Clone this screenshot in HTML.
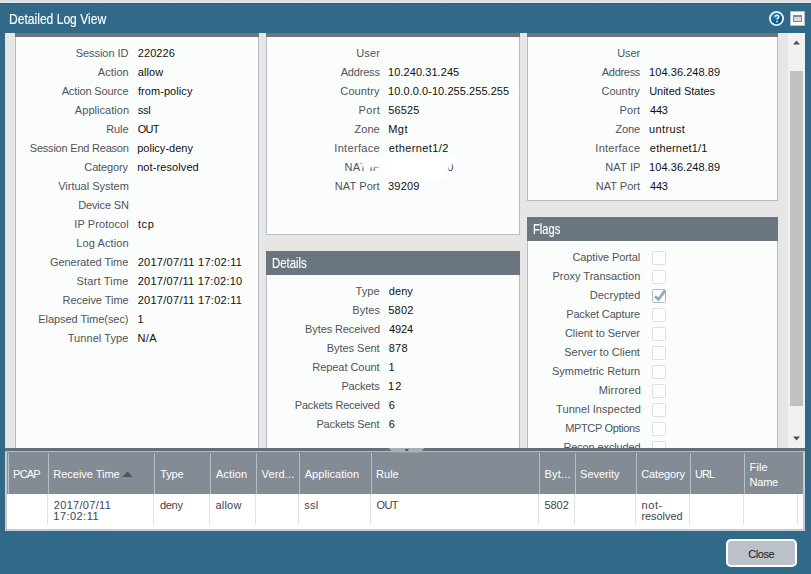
<!DOCTYPE html>
<html><head><meta charset="utf-8"><title>Detailed Log View</title>
<style>
html,body{margin:0;padding:0}
body{width:811px;height:574px;overflow:hidden;background:#306a88;position:relative;font-family:"Liberation Sans",sans-serif;font-size:11px}
div,span,svg{position:absolute;box-sizing:border-box}
.t{white-space:pre;line-height:14px;height:14px}
.cn{white-space:pre;color:#fff;transform-origin:0 0;line-height:16px;-webkit-text-stroke:.15px #fff}
#strip{left:0;top:0;width:811px;height:4px;background:#dcdfe3}
#body{left:5px;top:33px;width:800px;height:415px;background:#e6e6e6;overflow:hidden}
.pn{background:#fbfdfc;border-left:1px solid #b7bcc8;border-right:1px solid #b7bcc8}
.pb{border-bottom:1px solid #b7bcc8}
.hd{background:#6a757e}
.cb{width:14px;height:14px;border:1px solid #dce0e6;border-radius:1.500px;background:#fcfdfd;left:647px}
#sb{left:783px;top:0;width:17px;height:415px;background:#f1f1f1}
#grid{left:5px;top:451px;width:800px;height:80px;background:#c9cdd2}
.hs{top:2px;width:1px;height:41px;background:#b9bfc6}
.rs{top:43px;width:1px;height:31px;background:#dfe2e6}
</style></head><body>
<div id="strip"><div style="left:8px;top:0;width:1px;height:2px;background:#d0d6dd"></div><div style="left:97px;top:0;width:1px;height:2px;background:#d0d6dd"></div><div style="left:172px;top:0;width:1px;height:2px;background:#d0d6dd"></div><div style="left:227px;top:0;width:1px;height:2px;background:#d0d6dd"></div><div style="left:309px;top:0;width:1px;height:2px;background:#d0d6dd"></div><div style="left:399px;top:0;width:1px;height:2px;background:#d0d6dd"></div><div style="left:446px;top:0;width:1px;height:2px;background:#d0d6dd"></div><div style="left:519px;top:0;width:1px;height:2px;background:#d0d6dd"></div><div style="left:595px;top:0;width:1px;height:2px;background:#d0d6dd"></div><div style="left:658px;top:0;width:1px;height:2px;background:#d0d6dd"></div><div style="left:739px;top:0;width:1px;height:2px;background:#d0d6dd"></div><div style="left:0;top:2px;width:811px;height:1px;background:#e7e9ec"></div><div style="left:0;top:3px;width:811px;height:1px;background:#27607f"></div></div>
<span class="cn" id="title" style="left:9.300px;top:11px;font-size:14.5px;transform:scaleX(.833);-webkit-text-stroke:.15px #fff">Detailed Log View</span>
<!-- help icon -->
<svg style="left:768px;top:10px" width="17" height="17" viewBox="0 0 17 17">
<defs><radialGradient id="hg" cx="35%" cy="28%" r="75%"><stop offset="0" stop-color="#2f8acb"/><stop offset=".55" stop-color="#0f639d"/><stop offset="1" stop-color="#084470"/></radialGradient></defs>
<circle cx="8.5" cy="8.5" r="6.6" fill="url(#hg)" stroke="#e6eef8" stroke-width="1.9"/>
<path d="M7.400 7c0-1 .65-1.650 1.650-1.650 1 0 1.650.6 1.650 1.450 0 .8-.45 1.100-.9 1.500-.5.400-.7.700-.7 1.300" fill="none" stroke="#fff" stroke-width="1.500"/><circle cx="9.100" cy="11.600" r=".95" fill="#fff"/>
</svg>
<!-- maximize icon -->
<div style="left:790px;top:11px;width:15px;height:15px;background:#fff;border:1px solid #b9bec3"><div style="left:2px;top:3px;width:9px;height:7px;border:1px solid #7b8a99;border-top-width:2px;background:#dadada"></div></div>

<div id="body">
 <!-- panel 1 -->
 <div class="pn" style="left:10px;top:0;width:244px;height:420px"></div>
 <div class="hd" style="left:10px;top:0;width:244px;height:4px"></div>
 <!-- panel 2 -->
 <div class="pn pb" style="left:261px;top:0;width:254px;height:202px"></div>
 <div class="hd" style="left:261px;top:0;width:254px;height:4px"></div>
 <div class="pn" style="left:261px;top:218px;width:254px;height:200px"></div>
 <div class="hd" style="left:261px;top:218px;width:254px;height:24px"></div>
 <!-- panel 3 -->
 <div class="pn pb" style="left:522px;top:0;width:251px;height:168px"></div>
 <div class="hd" style="left:522px;top:0;width:251px;height:4px"></div>
 <div class="pn" style="left:522px;top:184px;width:251px;height:240px"></div>
 <div class="hd" style="left:522px;top:184px;width:251px;height:24px"></div>
 <!-- checkboxes -->
 <div class="cb" style="top:218px"></div>
 <div class="cb" style="top:237px"></div>
 <div class="cb" style="top:256px;border-color:#b3bac3"><svg style="left:-1px;top:-1px;overflow:visible" width="15" height="14"><path d="M2.900 7.300L6.400 10.500L13.100 1.700" fill="none" stroke="#8aaac2" stroke-width="2.800"/></svg></div>
 <div class="cb" style="top:275px"></div>
 <div class="cb" style="top:294px"></div>
 <div class="cb" style="top:313px"></div>
 <div class="cb" style="top:332px"></div>
 <div class="cb" style="top:351px"></div>
 <div class="cb" style="top:370px"></div>
 <div class="cb" style="top:389px"></div>
 <div class="cb" style="top:408px"></div>
 <!-- scrollbar -->
 <div id="sb">
  <div style="left:2px;top:38px;width:13px;height:335px;background:#c1c1c1"></div>
  <svg style="left:0;top:0" width="17" height="415"><path d="M5 11.500l3.500-4 3.500 4z" fill="#505050"/><path d="M5 403.500l3.500 4 3.500-4z" fill="#505050"/></svg>
 </div>
</div>
<span class="cn" style="left:272px;top:255px;font-size:14px;transform:scaleX(.81)">Details</span>
<span class="cn" style="left:533px;top:221px;font-size:14px;transform:scaleX(.80)">Flags</span>
<div id="toptext" style="left:0;top:0;width:811px;height:448px;overflow:hidden">
<span class="t" style="left:75.79px;top:46.19px;color:#4f5459;letter-spacing:-0.062px">Session ID</span>
<span class="t" style="left:137.70px;top:46.19px;color:#111;letter-spacing:0.109px">220226</span>
<span class="t" style="left:97.87px;top:65.19px;color:#4f5459;letter-spacing:0.061px">Action</span>
<span class="t" style="left:137.73px;top:65.19px;color:#111;letter-spacing:0.121px">allow</span>
<span class="t" style="left:61.67px;top:84.19px;color:#4f5459;letter-spacing:-0.133px">Action Source</span>
<span class="t" style="left:137.90px;top:84.19px;color:#111;letter-spacing:0.071px">from-policy</span>
<span class="t" style="left:74.87px;top:103.19px;color:#4f5459;letter-spacing:0.033px">Application</span>
<span class="t" style="left:137.67px;top:103.19px;color:#111;letter-spacing:-0.175px">ssl</span>
<span class="t" style="left:106.21px;top:122.19px;color:#4f5459;letter-spacing:-0.071px">Rule</span>
<span class="t" style="left:137.72px;top:122.19px;color:#111;letter-spacing:-0.707px">OUT</span>
<span class="t" style="left:29.79px;top:141.19px;color:#4f5459;letter-spacing:-0.213px">Session End Reason</span>
<span class="t" style="left:137.16px;top:141.19px;color:#111;letter-spacing:0.016px">policy-deny</span>
<span class="t" style="left:84.37px;top:160.19px;color:#4f5459;letter-spacing:-0.150px">Category</span>
<span class="t" style="left:137.15px;top:160.19px;color:#111;letter-spacing:0.094px">not-resolved</span>
<span class="t" style="left:58.15px;top:179.19px;color:#4f5459;letter-spacing:0.002px">Virtual System</span>
<span class="t" style="left:78.27px;top:198.19px;color:#4f5459;letter-spacing:-0.162px">Device SN</span>
<span class="t" style="left:74.35px;top:217.19px;color:#4f5459;letter-spacing:0.082px">IP Protocol</span>
<span class="t" style="left:137.90px;top:217.19px;color:#111;letter-spacing:0.624px">tcp</span>
<span class="t" style="left:76.17px;top:236.19px;color:#4f5459;letter-spacing:0.119px">Log Action</span>
<span class="t" style="left:49.89px;top:255.19px;color:#4f5459;letter-spacing:-0.032px">Generated Time</span>
<span class="t" style="left:137.70px;top:255.19px;color:#111;letter-spacing:0.276px">2017/07/11 17:02:11</span>
<span class="t" style="left:76.49px;top:274.19px;color:#4f5459;letter-spacing:0.197px">Start Time</span>
<span class="t" style="left:137.70px;top:274.19px;color:#111;letter-spacing:0.242px">2017/07/11 17:02:10</span>
<span class="t" style="left:62.51px;top:293.19px;color:#4f5459;letter-spacing:-0.047px">Receive Time</span>
<span class="t" style="left:137.70px;top:293.19px;color:#111;letter-spacing:0.276px">2017/07/11 17:02:11</span>
<span class="t" style="left:38.31px;top:312.19px;color:#4f5459;letter-spacing:-0.056px">Elapsed Time(sec)</span>
<span class="t" style="left:137.42px;top:312.19px;color:#111;letter-spacing:0.000px">1</span>
<span class="t" style="left:67.71px;top:331.19px;color:#4f5459;letter-spacing:0.077px">Tunnel Type</span>
<span class="t" style="left:137.59px;top:331.19px;color:#111;letter-spacing:0.330px">N/A</span>
<span class="t" style="left:356.25px;top:46.19px;color:#4f5459;letter-spacing:0.123px">User</span>
<span class="t" style="left:340.67px;top:65.19px;color:#4f5459;letter-spacing:-0.179px">Address</span>
<span class="t" style="left:388.02px;top:65.19px;color:#111;letter-spacing:0.071px">10.240.31.245</span>
<span class="t" style="left:340.37px;top:84.19px;color:#4f5459;letter-spacing:0.091px">Country</span>
<span class="t" style="left:388.02px;top:84.19px;color:#111;letter-spacing:0.056px">10.0.0.0-10.255.255.255</span>
<span class="t" style="left:358.41px;top:103.19px;color:#4f5459;letter-spacing:0.387px">Port</span>
<span class="t" style="left:388.17px;top:103.19px;color:#111;letter-spacing:0.169px">56525</span>
<span class="t" style="left:354.58px;top:122.19px;color:#4f5459;letter-spacing:0.028px">Zone</span>
<span class="t" style="left:388.19px;top:122.19px;color:#111;letter-spacing:0.489px">Mgt</span>
<span class="t" style="left:334.25px;top:141.19px;color:#4f5459;letter-spacing:0.328px">Interface</span>
<span class="t" style="left:388.72px;top:141.19px;color:#111;letter-spacing:0.403px">ethernet1/2</span>
<span class="t" style="left:344.49px;top:160.19px;color:#4f5459;letter-spacing:0.225px">NAT IP</span>
<span class="t" style="left:334.79px;top:179.19px;color:#4f5459;letter-spacing:0.097px">NAT Port</span>
<span class="t" style="left:388.05px;top:179.19px;color:#111;letter-spacing:0.202px">39209</span>
<span class="t" style="left:440.67px;top:160.19px;color:#333;letter-spacing:0.482px">40</span>
<span class="t" style="left:355.51px;top:284.19px;color:#4f5459;letter-spacing:0.124px">Type</span>
<span class="t" style="left:388.72px;top:284.19px;color:#111;letter-spacing:0.099px">deny</span>
<span class="t" style="left:352.21px;top:303.19px;color:#4f5459;letter-spacing:0.092px">Bytes</span>
<span class="t" style="left:388.17px;top:303.19px;color:#111;letter-spacing:0.257px">5802</span>
<span class="t" style="left:305.11px;top:322.19px;color:#4f5459;letter-spacing:-0.115px">Bytes Received</span>
<span class="t" style="left:388.97px;top:322.19px;color:#111;letter-spacing:-0.103px">4924</span>
<span class="t" style="left:326.71px;top:341.19px;color:#4f5459;letter-spacing:-0.027px">Bytes Sent</span>
<span class="t" style="left:388.72px;top:341.19px;color:#111;letter-spacing:0.225px">878</span>
<span class="t" style="left:312.31px;top:360.19px;color:#4f5459;letter-spacing:-0.055px">Repeat Count</span>
<span class="t" style="left:388.52px;top:360.19px;color:#111;letter-spacing:0.000px">1</span>
<span class="t" style="left:341.41px;top:379.19px;color:#4f5459;letter-spacing:-0.135px">Packets</span>
<span class="t" style="left:388.02px;top:379.19px;color:#111;letter-spacing:1.208px">12</span>
<span class="t" style="left:294.81px;top:398.19px;color:#4f5459;letter-spacing:-0.198px">Packets Received</span>
<span class="t" style="left:388.67px;top:398.19px;color:#111;letter-spacing:0.000px">6</span>
<span class="t" style="left:316.41px;top:417.19px;color:#4f5459;letter-spacing:-0.155px">Packets Sent</span>
<span class="t" style="left:388.67px;top:417.19px;color:#111;letter-spacing:0.000px">6</span>
<span class="t" style="left:617.25px;top:46.19px;color:#4f5459;letter-spacing:-0.077px">User</span>
<span class="t" style="left:601.77px;top:65.19px;color:#4f5459;letter-spacing:-0.296px">Address</span>
<span class="t" style="left:649.12px;top:65.19px;color:#111;letter-spacing:0.050px">104.36.248.89</span>
<span class="t" style="left:601.47px;top:84.19px;color:#4f5459;letter-spacing:-0.025px">Country</span>
<span class="t" style="left:649.15px;top:84.19px;color:#111;letter-spacing:-0.011px">United States</span>
<span class="t" style="left:619.61px;top:103.19px;color:#4f5459;letter-spacing:0.120px">Port</span>
<span class="t" style="left:650.07px;top:103.19px;color:#111;letter-spacing:-0.252px">443</span>
<span class="t" style="left:615.48px;top:122.19px;color:#4f5459;letter-spacing:-0.139px">Zone</span>
<span class="t" style="left:649.11px;top:122.19px;color:#111;letter-spacing:0.344px">untrust</span>
<span class="t" style="left:595.35px;top:141.19px;color:#4f5459;letter-spacing:0.240px">Interface</span>
<span class="t" style="left:649.82px;top:141.19px;color:#111;letter-spacing:0.195px">ethernet1/1</span>
<span class="t" style="left:605.29px;top:160.19px;color:#4f5459;letter-spacing:0.145px">NAT IP</span>
<span class="t" style="left:649.12px;top:160.19px;color:#111;letter-spacing:0.050px">104.36.248.89</span>
<span class="t" style="left:595.79px;top:179.19px;color:#4f5459;letter-spacing:0.012px">NAT Port</span>
<span class="t" style="left:650.07px;top:179.19px;color:#111;letter-spacing:-0.252px">443</span>
<span class="t" style="left:572.47px;top:250.19px;color:#4f5459;letter-spacing:-0.099px">Captive Portal</span>
<span class="t" style="left:552.51px;top:269.19px;color:#4f5459;letter-spacing:-0.017px">Proxy Transaction</span>
<span class="t" style="left:589.67px;top:288.19px;color:#4f5459;letter-spacing:0.071px">Decrypted</span>
<span class="t" style="left:566.21px;top:307.19px;color:#4f5459;letter-spacing:-0.149px">Packet Capture</span>
<span class="t" style="left:564.97px;top:326.19px;color:#4f5459;letter-spacing:-0.057px">Client to Server</span>
<span class="t" style="left:564.19px;top:345.19px;color:#4f5459;letter-spacing:-0.006px">Server to Client</span>
<span class="t" style="left:551.99px;top:364.19px;color:#4f5459;letter-spacing:0.016px">Symmetric Return</span>
<span class="t" style="left:598.69px;top:383.19px;color:#4f5459;letter-spacing:0.164px">Mirrored</span>
<span class="t" style="left:556.11px;top:402.19px;color:#4f5459;letter-spacing:0.049px">Tunnel Inspected</span>
<span class="t" style="left:565.19px;top:421.19px;color:#4f5459;letter-spacing:-0.349px">MPTCP Options</span>
<span class="t" style="left:563.41px;top:440.19px;color:#4f5459;letter-spacing:-0.121px">Recon excluded</span>
<!-- smudge -->
<svg style="left:355px;top:152px;filter:blur(.8px)" width="105" height="32"><path d="M6.300 5 Q50 1 98 5 L98 11.500 L96 14.500 L93 17 L91 26 L30 26 L30 15.400 L6.300 15.200 Z" fill="#fff"/></svg>
</div>
<!-- splitter -->
<div style="left:5px;top:448px;width:800px;height:3px;background:#62707a"></div>
<div id="grid">
 <div style="left:0;top:0;width:800px;height:1px;background:#b4bac1"></div>
 <div style="left:2px;top:1px;width:796px;height:42px;background:#838c95"></div>
 <div style="left:2px;top:43px;width:796px;height:35px;background:#fff"></div>
 <div class="hs" style="left:3px"></div>
 <div class="hs" style="left:43px"></div><div class="hs" style="left:149px"></div><div class="hs" style="left:205px"></div><div class="hs" style="left:251px"></div><div class="hs" style="left:294px"></div><div class="hs" style="left:366px"></div><div class="hs" style="left:534px"></div><div class="hs" style="left:570px"></div><div class="hs" style="left:631px"></div><div class="hs" style="left:685px"></div><div class="hs" style="left:739px"></div><div class="rs" style="left:42px"></div><div class="rs" style="left:148px"></div><div class="rs" style="left:204px"></div><div class="rs" style="left:250px"></div><div class="rs" style="left:293px"></div><div class="rs" style="left:365px"></div><div class="rs" style="left:533px"></div><div class="rs" style="left:569px"></div><div class="rs" style="left:630px"></div><div class="rs" style="left:684px"></div><div class="rs" style="left:738px"></div><div class="rs" style="left:792px"></div>
</div>
<svg style="left:386px;top:448px" width="42" height="5"><path d="M2.500 0h36l-4.500 4.500h-27z" fill="#a9aeb4"/><path d="M18.500 1h4.500l-2.250 2.500z" fill="#444c55"/></svg>
<svg style="left:122px;top:471px" width="12" height="7"><path d="M.5 6l5-5.500 5 5.500z" fill="#4b5560"/></svg>
<div style="left:726px;top:539px;width:71px;height:28px;border:2px solid #fff;border-radius:5px;background:#bcc0c8"></div>
<div id="bottext" style="left:0;top:0;width:811px;height:574px">
<span class="t" style="left:13.11px;top:467.19px;color:#ffffff;letter-spacing:-0.793px">PCAP</span>
<span class="t" style="left:53.31px;top:467.19px;color:#ffffff;letter-spacing:-0.019px">Receive Time</span>
<span class="t" style="left:160.31px;top:467.19px;color:#ffffff;letter-spacing:-0.143px">Type</span>
<span class="t" style="left:215.97px;top:467.19px;color:#ffffff;letter-spacing:0.101px">Action</span>
<span class="t" style="left:261.55px;top:467.19px;color:#ffffff;letter-spacing:0.169px">Verd...</span>
<span class="t" style="left:304.67px;top:467.19px;color:#ffffff;letter-spacing:0.063px">Application</span>
<span class="t" style="left:376.11px;top:467.19px;color:#ffffff;letter-spacing:-0.004px">Rule</span>
<span class="t" style="left:544.51px;top:467.19px;color:#ffffff;letter-spacing:0.184px">Byt...</span>
<span class="t" style="left:580.09px;top:467.19px;color:#ffffff;letter-spacing:-0.039px">Severity</span>
<span class="t" style="left:641.27px;top:467.19px;color:#ffffff;letter-spacing:-0.136px">Category</span>
<span class="t" style="left:695.05px;top:467.19px;color:#ffffff;letter-spacing:-0.967px">URL</span>
<span class="t" style="left:749.61px;top:459.89px;color:#ffffff;letter-spacing:0.063px">File</span>
<span class="t" style="left:749.59px;top:474.79px;color:#ffffff;letter-spacing:-0.235px">Name</span>
<span class="t" style="left:53.80px;top:498.19px;color:#3f444b;letter-spacing:0.302px">2017/07/11</span>
<span class="t" style="left:53.32px;top:509.19px;color:#3f444b;letter-spacing:0.458px">17:02:11</span>
<span class="t" style="left:159.92px;top:498.19px;color:#3f444b;letter-spacing:-0.268px">deny</span>
<span class="t" style="left:215.43px;top:498.19px;color:#3f444b;letter-spacing:0.221px">allow</span>
<span class="t" style="left:304.37px;top:498.19px;color:#3f444b;letter-spacing:0.175px">ssl</span>
<span class="t" style="left:376.42px;top:498.19px;color:#3f444b;letter-spacing:-0.557px">OUT</span>
<span class="t" style="left:544.47px;top:498.19px;color:#3f444b;letter-spacing:-0.043px">5802</span>
<span class="t" style="left:641.45px;top:498.19px;color:#3f444b;letter-spacing:0.607px">not-</span>
<span class="t" style="left:641.43px;top:509.19px;color:#3f444b;letter-spacing:-0.063px">resolved</span>
<span class="t" style="left:748.17px;top:546.89px;color:#1a1a1a;letter-spacing:-0.426px">Close</span>
</div>
</body></html>
